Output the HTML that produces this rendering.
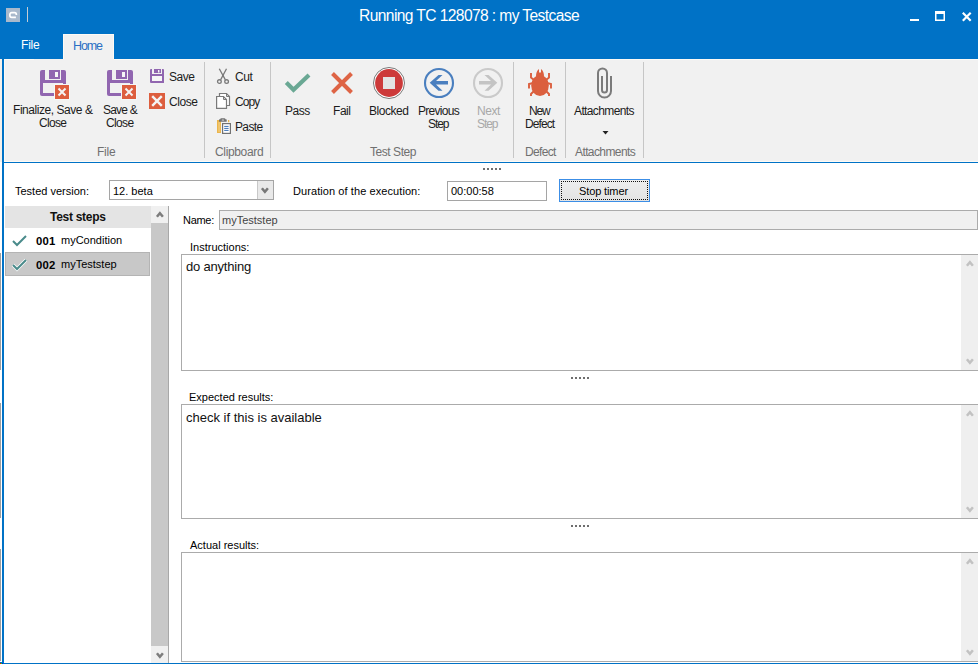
<!DOCTYPE html>
<html><head><meta charset="utf-8">
<style>
html,body{margin:0;padding:0;}
body{width:978px;height:664px;position:relative;overflow:hidden;background:#fff;font-family:"Liberation Sans",sans-serif;color:#1e1e1e;}
.a{position:absolute;}
.t{position:absolute;white-space:nowrap;line-height:1;}
.r{font-size:12px;letter-spacing:-0.45px;color:#1c1c1c;}
.g{font-size:12px;letter-spacing:-0.25px;color:#707070;}
.f{font-size:11px;color:#000;}
.sep{position:absolute;top:62px;width:1px;height:96px;background:#c6c6c6;}
svg{position:absolute;overflow:visible;}
</style></head><body>
<!-- title bar -->
<div class="a" style="left:0;top:0;width:978px;height:59px;background:#0072c6;"></div>
<div class="a" style="left:6px;top:8px;width:14px;height:14px;background:#a9b9cc;"></div>
<svg style="left:6px;top:8px" width="14" height="14"><path d="M9.9 9.4 H5.8 Q3.8 9.4 3.8 7 Q3.8 4.7 5.8 4.7 H8.6 Q10.4 4.7 10.4 7" fill="none" stroke="#fff" stroke-width="1.7"/></svg>
<div class="a" style="left:27px;top:7px;width:1px;height:15px;background:#c4ccd4;"></div>
<div class="t" style="left:359px;top:8px;font-size:15.6px;letter-spacing:-0.6px;color:#fff;">Running TC 128078 : my Testcase</div>
<!-- window buttons -->
<div class="a" style="left:910px;top:19px;width:9px;height:2px;background:#fff;"></div>
<svg style="left:934px;top:10px" width="12" height="12"><path d="M1.75 1.75 H10.25 V10.25 H1.75 Z" fill="none" stroke="#fff" stroke-width="1.5"/><rect x="1" y="1" width="10" height="3" fill="#fff"/></svg>
<svg style="left:962px;top:12px" width="10" height="10"><path d="M0.8 0.8 L8.7 8.7 M8.7 0.8 L0.8 8.7" stroke="#fff" stroke-width="2.2"/></svg>
<!-- tabs -->
<div class="t" style="left:21px;top:39px;font-size:12px;letter-spacing:-0.2px;color:#fff;">File</div>
<div class="a" style="left:63px;top:34px;width:49px;height:26px;background:#f1f1f1;border:1px solid #fdfaf5;border-bottom:none;"></div>
<div class="t" style="left:73px;top:40px;font-size:12.5px;letter-spacing:-1.1px;color:#2b6fc4;">Home</div>
<!-- ribbon -->
<div class="a" style="left:0;top:59px;width:2px;height:103px;background:#f4f1ec;"></div>
<div class="a" style="left:2px;top:59px;width:2px;height:605px;background:#0072c6;"></div>
<div class="a" style="left:4px;top:59px;width:974px;height:102px;background:#f1f1f1;border-top:1px solid #fdfaf5;box-sizing:border-box;border-left:1px solid #fdfaf5;"></div>
<div class="a" style="left:34px;top:59px;width:80px;height:1px;background:#f1f1f1;"></div>
<div class="a" style="left:4px;top:161px;width:974px;height:1px;background:#fdfaf5;"></div>
<div class="a" style="left:4px;top:162px;width:974px;height:1px;background:#0072c6;"></div>

<!-- File group -->
<svg style="left:40px;top:70px" width="30" height="30">
 <path d="M0 2 Q0 0 2 0 H24 Q26 0 26 2 V26 H2 Q0 26 0 24 Z" fill="#9166b0"/>
 <rect x="3" y="13" width="20" height="10" fill="#f1f1f1"/>
 <rect x="5" y="0" width="4" height="10" fill="#f1f1f1"/>
 <rect x="20" y="0" width="1" height="10" fill="#f1f1f1"/>
 <rect x="5" y="9" width="16" height="1" fill="#f1f1f1"/>
 <rect x="15" y="2" width="3" height="5" fill="#f7f7f7"/>
 <rect x="14" y="14" width="16" height="16" fill="#f4f8f8"/>
 <rect x="15" y="15" width="14" height="14" fill="#dd5e3e"/>
 <path d="M18.5 18.5 L25.5 25.5 M25.5 18.5 L18.5 25.5" stroke="#f4f4f4" stroke-width="2"/>
</svg>
<div class="t r" style="left:13px;top:104px;">Finalize, Save &amp;</div>
<div class="t r" style="left:39px;top:117px;letter-spacing:-0.7px;">Close</div>

<svg style="left:107px;top:70px" width="30" height="30">
 <path d="M0 2 Q0 0 2 0 H24 Q26 0 26 2 V26 H2 Q0 26 0 24 Z" fill="#9166b0"/>
 <rect x="3" y="13" width="20" height="10" fill="#f1f1f1"/>
 <rect x="5" y="0" width="4" height="10" fill="#f1f1f1"/>
 <rect x="20" y="0" width="1" height="10" fill="#f1f1f1"/>
 <rect x="5" y="9" width="16" height="1" fill="#f1f1f1"/>
 <rect x="15" y="2" width="3" height="5" fill="#f7f7f7"/>
 <rect x="14" y="14" width="16" height="16" fill="#f4f8f8"/>
 <rect x="15" y="15" width="14" height="14" fill="#dd5e3e"/>
 <path d="M18.5 18.5 L25.5 25.5 M25.5 18.5 L18.5 25.5" stroke="#f4f4f4" stroke-width="2"/>
</svg>
<div class="t r" style="left:103px;top:104px;letter-spacing:-0.8px;">Save &amp;</div>
<div class="t r" style="left:106px;top:117px;letter-spacing:-0.65px;">Close</div>

<svg style="left:150px;top:69px" width="14" height="14">
 <path d="M0 1 Q0 0 1 0 H13 Q14 0 14 1 V14 H1 Q0 14 0 13 Z" fill="#9166b0"/>
 <rect x="2" y="7" width="10" height="5" fill="#f7f7f7"/>
 <rect x="2" y="0" width="2" height="4" fill="#f1f1f1"/>
 <rect x="11" y="0" width="1" height="4" fill="#f1f1f1"/>
 <rect x="2" y="4" width="10" height="1" fill="#f1f1f1"/>
 <rect x="8" y="1" width="1.4" height="2.5" fill="#f7f7f7"/>
</svg>
<div class="t r" style="left:169px;top:71px;">Save</div>
<svg style="left:149px;top:93px" width="16" height="16">
 <rect x="0" y="0" width="16" height="16" fill="#dd5e3e"/>
 <path d="M3.2 3.2 L12.8 12.8 M12.8 3.2 L3.2 12.8" stroke="#f4f4f4" stroke-width="2.4"/>
</svg>
<div class="t r" style="left:169px;top:96px;">Close</div>
<div class="t g" style="left:97px;top:146px;">File</div>
<div class="sep" style="left:204px;"></div>

<!-- Clipboard -->
<svg style="left:216px;top:68px" width="16" height="16">
 <path d="M3.3 0.8 L9.4 11.9 M10.5 0.8 L4.6 11.9" stroke="#7a7a7a" stroke-width="1.3" fill="none"/>
 <circle cx="6.95" cy="7.6" r="0.9" fill="#7a7a7a"/>
 <circle cx="3.4" cy="13.6" r="1.85" stroke="#7a7a7a" stroke-width="1.3" fill="none"/>
 <circle cx="10.6" cy="13.6" r="1.85" stroke="#7a7a7a" stroke-width="1.3" fill="none"/>
</svg>
<div class="t r" style="left:235px;top:71px;">Cut</div>
<svg style="left:216px;top:93px" width="16" height="16">
 <path d="M3.5 0.5 H10.5 L13.5 3.5 V12.5 H3.5 Z" fill="#fff" stroke="#7a7a7a" stroke-width="1.2"/>
 <path d="M10.5 0.5 V3.5 H13.5" fill="none" stroke="#7a7a7a" stroke-width="1"/>
 <path d="M0.6 3.5 H7.5 L10.5 6.5 V15.4 H0.6 Z" fill="#fff" stroke="#7a7a7a" stroke-width="1.2"/>
 <path d="M7.5 3.5 V6.5 H10.5" fill="none" stroke="#7a7a7a" stroke-width="1"/>
</svg>
<div class="t r" style="left:235px;top:96px;letter-spacing:-0.9px;">Copy</div>
<svg style="left:217px;top:118px" width="16" height="16">
 <rect x="0" y="2" width="4" height="13" fill="#ebb54c"/>
 <rect x="1.2" y="4" width="2" height="10" fill="#f0c670"/>
 <rect x="11" y="2" width="1.3" height="2.2" fill="#ebb54c"/>
 <rect x="2" y="1.3" width="7.7" height="2.5" rx="0.6" fill="#727272"/>
 <rect x="3.3" y="0.2" width="5" height="2" rx="0.8" fill="#727272"/>
 <ellipse cx="5.9" cy="2" rx="1.3" ry="0.6" fill="#e8e8e8"/>
 <rect x="5.6" y="5.6" width="7.8" height="9.8" fill="#fff" stroke="#727272" stroke-width="1.2"/>
 <path d="M7.2 8.4 H11.6 M7.2 10.4 H11.6 M7.2 12.4 H11.6" stroke="#3a72b8" stroke-width="1"/>
</svg>
<div class="t r" style="left:235px;top:121px;letter-spacing:-0.65px;">Paste</div>
<div class="t g" style="left:215px;top:146px;letter-spacing:-0.35px;">Clipboard</div>
<div class="sep" style="left:270px;"></div>

<!-- Test Step -->
<svg style="left:280px;top:66px" width="34" height="34">
 <path d="M6.3 16.6 L13.5 23.8 L29 9.1" fill="none" stroke="#6aa894" stroke-width="4.2"/>
</svg>
<div class="t r" style="left:285px;top:105px;">Pass</div>
<svg style="left:326px;top:66px" width="34" height="34">
 <path d="M6.5 7.5 L25.5 26.5 M25.5 7.5 L6.5 26.5" fill="none" stroke="#de6445" stroke-width="4"/>
</svg>
<div class="t r" style="left:333px;top:105px;">Fail</div>
<svg style="left:373px;top:67px" width="32" height="32">
 <circle cx="16" cy="16" r="15.5" fill="#fff" stroke="#6a6a6a" stroke-width="0.9"/>
 <circle cx="16" cy="16" r="13.9" fill="#cd3a3a"/>
 <rect x="10" y="10" width="12" height="12" fill="#e3e3e3"/>
</svg>
<div class="t r" style="left:369px;top:105px;">Blocked</div>
<svg style="left:424px;top:68px" width="30" height="30">
 <circle cx="15" cy="15" r="14" fill="none" stroke="#4a7fbf" stroke-width="2.1"/>
 <path d="M5.7 14.8 L14.5 7 H18.5 L12 13.1 H24 V16.6 H12 L18.5 22.8 H14.5 Z" fill="#4a7fbf"/>
</svg>
<div class="t r" style="left:418px;top:105px;letter-spacing:-0.72px;">Previous</div>
<div class="t r" style="left:428px;top:118px;letter-spacing:-1.1px;">Step</div>
<svg style="left:473px;top:68px" width="30" height="30">
 <circle cx="15" cy="15" r="14" fill="none" stroke="#cacaca" stroke-width="2.1"/>
 <path d="M24.3 14.8 L15.5 7 H11.5 L18 13.1 H6 V16.6 H18 L11.5 22.8 H15.5 Z" fill="#c4c4c4"/>
</svg>
<div class="t r" style="left:477px;top:105px;color:#a8a8a8;">Next</div>
<div class="t r" style="left:477px;top:118px;color:#a8a8a8;letter-spacing:-1.1px;">Step</div>
<div class="t g" style="left:370px;top:146px;letter-spacing:-0.45px;">Test Step</div>
<div class="sep" style="left:513px;"></div>

<!-- Defect -->
<svg style="left:526px;top:68px" width="28" height="30">
 <ellipse cx="14" cy="17.5" rx="8.8" ry="10.5" fill="#db5f3e"/>
 <path d="M10 8.5 Q10 3 13 1 L13 4.5 L15 4.5 L15 1 Q18 3 18 8.5 Z" fill="#db5f3e"/>
 <path d="M5 5 V9.5 L8 12 M23 5 V9.5 L20 12 M9 14.5 L3 16 V20.5 M19 14.5 L25 16 V20.5 M8 23 L5 26 V28 M20 23 L23 26 V28" fill="none" stroke="#db5f3e" stroke-width="1.9"/>
</svg>
<div class="t r" style="left:529px;top:105px;letter-spacing:-1.2px;">New</div>
<div class="t r" style="left:525px;top:118px;letter-spacing:-0.9px;">Defect</div>
<div class="t g" style="left:525px;top:146px;letter-spacing:-0.65px;">Defect</div>
<div class="sep" style="left:565px;"></div>

<!-- Attachments -->
<svg style="left:588px;top:64px" width="36" height="36">
 <path d="M14 12 V26 A2.5 2.5 0 0 0 19 26 V9 A4.5 4.5 0 0 0 10 9 V27 A6.5 6.5 0 0 0 23 27 V12" fill="none" stroke="#7b7b7b" stroke-width="2"/>
</svg>
<div class="t r" style="left:574px;top:105px;letter-spacing:-0.62px;">Attachments</div>
<svg style="left:602px;top:131px" width="7" height="4"><path d="M0.5 0 H6.5 L3.5 3.5 Z" fill="#222"/></svg>
<div class="t g" style="left:575px;top:146px;letter-spacing:-0.6px;">Attachments</div>
<div class="sep" style="left:643px;"></div>

<!-- splitter dots top -->
<svg style="left:483px;top:168px" width="20" height="3"><path d="M0 0h2v2h-2zM4 0h2v2h-2zM8 0h2v2h-2zM12 0h2v2h-2zM16 0h2v2h-2z" fill="#6e6e6e"/></svg>

<!-- form row -->
<div class="t f" style="left:15px;top:186px;">Tested version:</div>
<div class="a" style="left:109px;top:180px;width:163px;height:18px;border:1px solid #a5a5a5;background:#fff;"></div>
<div class="a" style="left:257px;top:181px;width:16px;height:18px;background:#e9e9e9;border-left:1px solid #c8c8c8;box-sizing:border-box;"></div>
<svg style="left:261px;top:187px" width="9" height="8"><path d="M0.9 1.3 L3.9 4.9 L6.9 1.3" fill="none" stroke="#777" stroke-width="2.5"/></svg>
<div class="t f" style="left:113px;top:186px;">12. beta</div>
<div class="t f" style="left:293px;top:186px;letter-spacing:0.08px;">Duration of the execution:</div>
<div class="a" style="left:447px;top:181px;width:98px;height:18px;border:1px solid #a5a5a5;background:#fff;"></div>
<div class="t f" style="left:451px;top:186px;">00:00:58</div>
<div class="a" style="left:559px;top:179px;width:89px;height:21px;border:1px solid #3c8ee6;background:linear-gradient(#eeeeee,#e3e3e3);"></div>
<div class="a" style="left:561px;top:181px;width:87px;height:19px;border:1px dotted #111;box-sizing:border-box;"></div>
<div class="t f" style="left:579px;top:186px;letter-spacing:-0.12px;">Stop timer</div>

<!-- left pane -->
<div class="a" style="left:5px;top:206px;width:146px;height:22px;background:#e4e4e4;"></div>
<div class="t" style="left:50px;top:211px;font-size:12px;font-weight:bold;letter-spacing:-0.28px;color:#111;">Test steps</div>
<div class="a" style="left:151px;top:206px;width:17px;height:457px;background:#c8c8c8;"></div>
<div class="a" style="left:151px;top:206px;width:17px;height:17px;background:#f0f0f0;"></div>
<div class="a" style="left:151px;top:646px;width:17px;height:17px;background:#f0f0f0;"></div>
<div class="a" style="left:168px;top:206px;width:1px;height:457px;background:#a8a8a8;"></div>
<svg style="left:156px;top:211px" width="8" height="8"><path d="M0.9 5.8 L3.9 2.2 L6.9 5.8" fill="none" stroke="#7d7d7d" stroke-width="2.5"/></svg>
<svg style="left:156px;top:652px" width="8" height="8"><path d="M0.9 1.3 L3.9 4.9 L6.9 1.3" fill="none" stroke="#7d7d7d" stroke-width="2.5"/></svg>

<svg style="left:12px;top:235px" width="15" height="12"><path d="M1 6 L5 10 L14 1" fill="none" stroke="#4a8b8b" stroke-width="2"/></svg>
<div class="t" style="left:36px;top:236px;font-size:11.3px;font-weight:bold;letter-spacing:0.25px;color:#000;">001</div>
<div class="t f" style="left:61px;top:235px;">myCondition</div>
<div class="a" style="left:5px;top:252px;width:143px;height:22px;background:#c8c8c8;border:1px solid #b4b4b4;"></div>
<svg style="left:12px;top:259px" width="15" height="12"><path d="M1 6 L5 10 L14 1" fill="none" stroke="#fff" stroke-width="3.5"/><path d="M1 6 L5 10 L14 1" fill="none" stroke="#4a8b8b" stroke-width="2"/></svg>
<div class="t" style="left:36px;top:260px;font-size:11.3px;font-weight:bold;letter-spacing:0.25px;color:#000;">002</div>
<div class="t f" style="left:61px;top:259px;">myTeststep</div>

<!-- right form -->
<div class="t f" style="left:183px;top:215px;letter-spacing:-0.3px;">Name:</div>
<div class="a" style="left:219px;top:210px;width:757px;height:18px;border:1px solid #ababab;background:#f0f0f0;"></div>
<div class="t f" style="left:222px;top:215px;color:#444;">myTeststep</div>

<div class="t f" style="left:190px;top:242px;">Instructions:</div>
<div class="a" style="left:181px;top:254px;width:800px;height:115px;border:1px solid #ababab;background:#fff;"></div>
<div class="a" style="left:961px;top:255px;width:17px;height:115px;background:#efefef;"></div>
<svg style="left:966px;top:260px" width="8" height="8"><path d="M0.9 5.8 L3.9 2.2 L6.9 5.8" fill="none" stroke="#c2c2c2" stroke-width="2.5"/></svg>
<svg style="left:966px;top:358px" width="8" height="8"><path d="M0.9 1.3 L3.9 4.9 L6.9 1.3" fill="none" stroke="#c2c2c2" stroke-width="2.5"/></svg>
<div class="t" style="left:186px;top:260px;font-size:13px;letter-spacing:-0.2px;color:#111;">do anything</div>
<svg style="left:571px;top:377px" width="20" height="3"><path d="M0 0h2v2h-2zM4 0h2v2h-2zM8 0h2v2h-2zM12 0h2v2h-2zM16 0h2v2h-2z" fill="#6e6e6e"/></svg>

<div class="t f" style="left:189px;top:392px;">Expected results:</div>
<div class="a" style="left:181px;top:404px;width:800px;height:113px;border:1px solid #ababab;background:#fff;"></div>
<div class="a" style="left:961px;top:405px;width:17px;height:113px;background:#efefef;"></div>
<svg style="left:966px;top:410px" width="8" height="8"><path d="M0.9 5.8 L3.9 2.2 L6.9 5.8" fill="none" stroke="#c2c2c2" stroke-width="2.5"/></svg>
<svg style="left:966px;top:506px" width="8" height="8"><path d="M0.9 1.3 L3.9 4.9 L6.9 1.3" fill="none" stroke="#c2c2c2" stroke-width="2.5"/></svg>
<div class="t" style="left:186px;top:411px;font-size:13px;letter-spacing:0px;color:#111;">check if this is available</div>
<svg style="left:571px;top:525px" width="20" height="3"><path d="M0 0h2v2h-2zM4 0h2v2h-2zM8 0h2v2h-2zM12 0h2v2h-2zM16 0h2v2h-2z" fill="#6e6e6e"/></svg>

<div class="t f" style="left:190px;top:540px;">Actual results:</div>
<div class="a" style="left:181px;top:552px;width:800px;height:108px;border:1px solid #ababab;background:#fff;"></div>
<div class="a" style="left:961px;top:553px;width:17px;height:108px;background:#efefef;"></div>
<svg style="left:966px;top:558px" width="8" height="8"><path d="M0.9 5.8 L3.9 2.2 L6.9 5.8" fill="none" stroke="#c2c2c2" stroke-width="2.5"/></svg>
<svg style="left:966px;top:649px" width="8" height="8"><path d="M0.9 1.3 L3.9 4.9 L6.9 1.3" fill="none" stroke="#c2c2c2" stroke-width="2.5"/></svg>

<div class="a" style="left:0;top:663px;width:978px;height:1px;background:#0072c6;"></div>
<div class="a" style="left:0;top:162px;width:2px;height:500px;background:#fff;"></div>
<div class="a" style="left:0;top:253px;width:1px;height:117px;background:#a0a0a0;"></div>
<div class="a" style="left:0;top:403px;width:1px;height:115px;background:#a0a0a0;"></div>
<div class="a" style="left:0;top:549px;width:1px;height:112px;background:#a0a0a0;"></div>
<div class="a" style="left:0;top:662px;width:4px;height:1px;background:#0072c6;"></div>
<div class="a" style="left:0;top:663px;width:1px;height:1px;background:#f00;"></div>
<div class="a" style="left:1px;top:663px;width:1px;height:1px;background:#0f0;"></div>
<div class="a" style="left:2px;top:663px;width:1px;height:1px;background:#00f;"></div>
</body></html>
